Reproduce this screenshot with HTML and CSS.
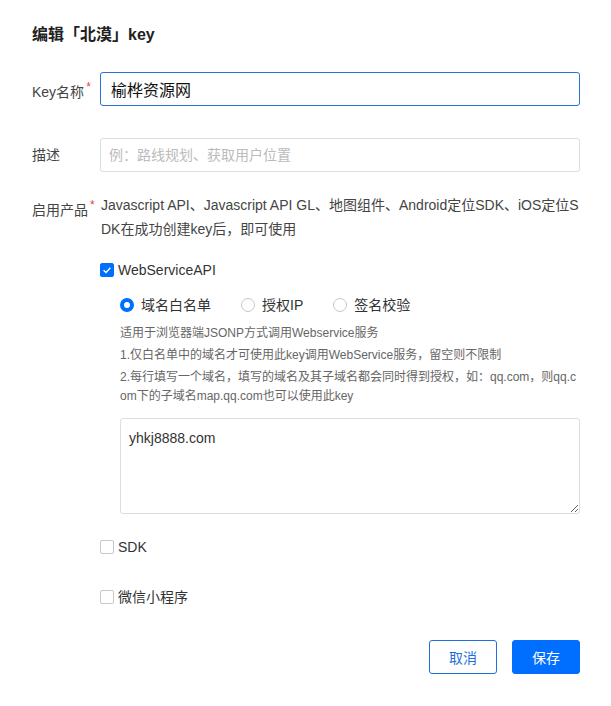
FILE: index.html
```html
<!DOCTYPE html>
<html lang="zh-CN">
<head>
<meta charset="utf-8">
<title>编辑key</title>
<link rel="stylesheet" href="styles.css">
</head>
<body>
<div class="dialog">
  <h2 class="title">编辑「北漠」key</h2>
  <div class="row row-key">
    <label class="label">Key名称<i class="req">*</i></label>
    <input class="input input-focus" type="text" value="榆桦资源网">
  </div>
  <div class="row row-desc">
    <label class="label">描述</label>
    <input class="input input-desc" type="text" placeholder="例：路线规划、获取用户位置">
  </div>
  <div class="row row-prod">
    <label class="label label-top">启用产品<i class="req">*</i></label>
    <div class="field">
      <p class="prod-text">Javascript API、Javascript API GL、地图组件、Android定位SDK、iOS定位SDK在成功创建key后，即可使用</p>
      <div class="check check-ws">
        <span class="box box-on"><svg viewBox="0 0 14 14" width="14" height="14"><path d="M3.6 7.2 L6 9.5 L10.4 4.8" fill="none" stroke="#fff" stroke-width="1.4"/></svg></span>
        <span class="check-text">WebServiceAPI</span>
      </div>
      <div class="sub">
        <div class="radios">
          <span class="radio"><span class="dot dot-on"></span><span>域名白名单</span></span>
          <span class="radio"><span class="dot"></span><span>授权IP</span></span>
          <span class="radio"><span class="dot"></span><span>签名校验</span></span>
        </div>
        <div class="tips">
          <p>适用于浏览器端JSONP方式调用Webservice服务</p>
          <p>1.仅白名单中的域名才可使用此key调用WebService服务，留空则不限制</p>
          <p>2.每行填写一个域名，填写的域名及其子域名都会同时得到授权，如：qq.com，则qq.com下的子域名map.qq.com也可以使用此key</p>
        </div>
        <textarea class="area">yhkj8888.com</textarea>
      </div>
      <div class="check check-sdk">
        <span class="box"></span>
        <span class="check-text">SDK</span>
      </div>
      <div class="check check-wx">
        <span class="box"></span>
        <span class="check-text">微信小程序</span>
      </div>
    </div>
  </div>
  <div class="footer">
    <button class="btn btn-ghost">取消</button>
    <button class="btn btn-primary">保存</button>
  </div>
</div>
</body>
</html>
```
FILE: styles.css
```css
html, body {
  margin: 0;
  padding: 0;
  background: #fff;
}
body {
  font-family: "Liberation Sans", "Noto Sans CJK SC", sans-serif;
  color: #333;
  font-size: 14px;
}
.dialog {
  width: 611px;
  box-sizing: border-box;
  padding: 24px 31px 0 32px;
}
.title {
  margin: 0;
  font-size: 16px;
  line-height: 22px;
  font-weight: bold;
  color: #222;
}
.row {
  display: flex;
}
.row-key {
  margin-top: 26px;
  align-items: center;
}
.row-desc {
  margin-top: 32px;
  align-items: center;
}
.row-prod {
  margin-top: 21px;
  align-items: flex-start;
}
.label {
  width: 68px;
  flex: none;
  font-size: 14px;
  line-height: 24px;
  color: #444;
  white-space: nowrap;
}
.req {
  font-style: normal;
  color: #e54545;
  font-size: 12px;
  vertical-align: 6px;
  margin-left: 2px;
}
.input {
  flex: 1;
  height: 34px;
  box-sizing: border-box;
  border: 1px solid #ddd;
  border-radius: 3px;
  padding: 0 10px;
  font-family: "Liberation Sans", "Noto Sans CJK SC", sans-serif;
  outline: none;
  margin: 0;
}
.input-focus {
  border-color: #2a6fd6;
  font-size: 16px;
  color: #111;
}
.input-desc {
  font-size: 14px;
  padding-left: 8px;
}
.input-desc::placeholder {
  color: #bbb;
}
.field {
  flex: 1;
  min-width: 0;
}
.prod-text {
  margin: 0 0 0 1px;
  line-height: 24px;
  color: #444;
  word-break: break-all;
}
.check {
  display: flex;
  align-items: center;
  line-height: 20px;
  color: #333;
}
.check-ws { margin-top: 19px; }
.check-sdk { margin-top: 23px; }
.check-wx { margin-top: 30px; }
.box {
  width: 14px;
  height: 14px;
  box-sizing: border-box;
  border: 1px solid #c8c8c8;
  border-radius: 2px;
  margin-right: 4px;
  display: flex;
}
.box-on {
  background: #006eff;
  border-color: #006eff;
}
.box-on svg {
  margin: -1px;
}
.sub {
  padding-left: 20px;
}
.radios {
  display: flex;
  margin-top: 15px;
  line-height: 20px;
  color: #333;
}
.radio {
  display: flex;
  align-items: center;
  margin-right: 30px;
}
.dot {
  width: 14px;
  height: 14px;
  box-sizing: border-box;
  border: 1px solid #c8c8c8;
  border-radius: 50%;
  margin-right: 7px;
}
.dot-on {
  border: 4px solid #006eff;
}
.tips {
  margin-top: 9px;
  font-size: 12px;
  line-height: 19px;
  color: #666;
  word-break: break-all;
}
.tips p {
  margin: 3px 0 0;
}
.tips p:first-child {
  margin-top: 0;
}
.area {
  display: block;
  margin-top: 12px;
  width: 100%;
  height: 96px;
  box-sizing: border-box;
  border: 1px solid #ddd;
  border-radius: 3px;
  padding: 9px 8px;
  font-family: "Liberation Sans", "Noto Sans CJK SC", sans-serif;
  font-size: 14px;
  line-height: 20px;
  color: #333;
  outline: none;
}
.footer {
  display: flex;
  justify-content: flex-end;
  gap: 15px;
  margin-top: 33px;
}
.btn {
  width: 68px;
  height: 34px;
  box-sizing: border-box;
  border-radius: 3px;
  font-family: "Liberation Sans", "Noto Sans CJK SC", sans-serif;
  font-size: 14px;
  cursor: pointer;
  padding: 0;
}
.btn-ghost {
  background: #fff;
  border: 1px solid #1f6fd9;
  color: #1f6fd9;
}
.btn-primary {
  background: #006eff;
  border: 1px solid #006eff;
  color: #fff;
}
```
